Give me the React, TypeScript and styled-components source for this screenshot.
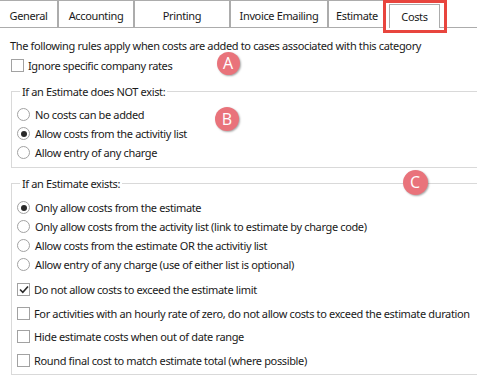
import React from 'react';
import styled, { createGlobalStyle } from 'styled-components';

const Global = createGlobalStyle`
  html, body { margin: 0; padding: 0; background: #fff; overflow: hidden; }
  body {
    font-family: "Noto Sans", "Open Sans", sans-serif;
    font-size: 11px;
    letter-spacing: -0.36px;
    color: #1a1a1a;
  }
  * { box-sizing: border-box; }
`;

const Page = styled.div`
  position: relative;
  width: 477px;
  height: 375px;
  overflow: hidden;
`;

const TabBar = styled.div`
  display: flex;
  align-items: flex-end;
  height: 28px;
  margin-left: -1px;
`;

const Tab = styled.div<{ $w: number; $active?: boolean; $gap?: number }>`
  position: relative;
  flex: 0 0 auto;
  width: ${p => p.$w}px;
  height: ${p => (p.$active ? 24 : 28)}px;
  margin-left: ${p => p.$gap ?? 0}px;
  border: 1px solid #acacac;
  border-bottom: ${p => (p.$active ? 'none' : '1px solid #acacac')};
  background: #fff;
  display: flex;
  align-items: center;
  justify-content: center;
  padding-top: ${p => (p.$active ? 0 : 4)}px;
  line-height: 16px;
  white-space: nowrap;
  ${p =>
    p.$active &&
    `
    &::after {
      content: '';
      position: absolute;
      left: -7px;
      right: -8px;
      top: -5px;
      bottom: -5px;
      border: 3px solid #e8453e;
    }
  `}
`;

const TabFiller = styled.div`
  flex: 1 1 auto;
  height: 28px;
  border-bottom: 1px solid #acacac;
`;

const Content = styled.div`
  padding: 0 0 0 10px;
`;

const Intro = styled.p`
  margin: 10px 0 0 0;
  line-height: 15px;
  white-space: nowrap;
`;

const CheckRow = styled.label<{ $h: number; $indent?: number }>`
  display: flex;
  align-items: center;
  height: ${p => p.$h}px;
  padding-left: ${p => p.$indent ?? 0}px;
  gap: 4px;
  white-space: nowrap;
`;

const Box = styled.span`
  flex: 0 0 auto;
  width: 13px;
  height: 13px;
  border: 1px solid #a2a2a2;
  background: #fff;
  display: flex;
  align-items: center;
  justify-content: center;
`;

const GroupBox = styled.fieldset<{ $mt: number; $pt: number; $pb: number }>`
  margin: ${p => p.$mt}px -40px 0 1px;
  padding: ${p => p.$pt}px 0 ${p => p.$pb}px 5px;
  border: 1px solid #d9d9d9;
  min-width: 0;
`;

const Legend = styled.legend`
  margin-left: 3px;
  padding: 0 2px;
  line-height: 15px;
`;

const RadioRow = styled.label`
  display: flex;
  align-items: center;
  height: 19px;
  gap: 5px;
  white-space: nowrap;
`;

const Radio = styled.span<{ $on?: boolean }>`
  flex: 0 0 auto;
  width: 13px;
  height: 13px;
  border-radius: 50%;
  border: 1px solid #a2a2a2;
  background: #fff;
  display: flex;
  align-items: center;
  justify-content: center;
  &::after {
    content: '';
    display: ${p => (p.$on ? 'block' : 'none')};
    width: 6px;
    height: 6px;
    border-radius: 50%;
    background: #2a2a2a;
  }
`;

const CheckList = styled.div`
  margin-top: 4px;
`;

const Badge = styled.div<{ $x: number; $y: number; $d: number }>`
  position: absolute;
  left: ${p => p.$x - p.$d / 2}px;
  top: ${p => p.$y - p.$d / 2}px;
  width: ${p => p.$d}px;
  height: ${p => p.$d}px;
  border-radius: 50%;
  background: #e9737b;
  box-shadow: 1px 1px 2px rgba(0, 0, 0, 0.35);
  color: #fff;
  font-family: "Open Sans", "Noto Sans", sans-serif;
  font-size: 16px;
  letter-spacing: 0;
  line-height: ${p => p.$d}px;
  text-align: center;
`;

const Tick = () => (
  <svg width="10" height="9" viewBox="0 0 10 9">
    <path d="M1 4.5 L3.8 7.3 L9 1.5" fill="none" stroke="#2a2a2a" strokeWidth="1.6" />
  </svg>
);

const tabs = [
  { t: 'General', w: 59 },
  { t: 'Accounting', w: 76 },
  { t: 'Printing', w: 96 },
  { t: 'Invoice Emailing', w: 98 },
  { t: 'Estimate', w: 58 },
];

const noEstimate = [
  { t: 'No costs can be added', on: false },
  { t: 'Allow costs from the activitiy list', on: true },
  { t: 'Allow entry of any charge', on: false },
];

const withEstimate = [
  { t: 'Only allow costs from the estimate', on: true },
  { t: 'Only allow costs from the activity list (link to estimate by charge code)', on: false },
  { t: 'Allow costs from the estimate OR the activitiy list', on: false },
  { t: 'Allow entry of any charge (use of either list is optional)', on: false },
];

const checks = [
  { t: 'Do not allow costs to exceed the estimate limit', on: true },
  { t: 'For activities with an hourly rate of zero, do not allow costs to exceed the estimate duration', on: false },
  { t: 'Hide estimate costs when out of date range', on: false },
  { t: 'Round final cost to match estimate total (where possible)', on: false },
];

export default function App() {
  return (
    <Page>
      <Global />
      <TabBar>
        {tabs.map(tb => (
          <Tab key={tb.t} $w={tb.w}>
            {tb.t}
          </Tab>
        ))}
        <Tab $w={51} $active $gap={3}>
          Costs
        </Tab>
        <TabFiller />
      </TabBar>
      <Content>
        <Intro>The following rules apply when costs are added to cases associated with this category</Intro>
        <CheckRow $h={15} $indent={1} style={{ marginTop: 5 }}>
          <Box />
          Ignore specific company rates
        </CheckRow>
        <GroupBox $mt={11} $pt={6} $pb={5}>
          <Legend>If an Estimate does NOT exist:</Legend>
          {noEstimate.map(r => (
            <RadioRow key={r.t}>
              <Radio $on={r.on} />
              {r.t}
            </RadioRow>
          ))}
        </GroupBox>
        <GroupBox $mt={8} $pt={7} $pb={2}>
          <Legend>If an Estimate exists:</Legend>
          {withEstimate.map(r => (
            <RadioRow key={r.t}>
              <Radio $on={r.on} />
              {r.t}
            </RadioRow>
          ))}
          <CheckList>
            {checks.map(c => (
              <CheckRow key={c.t} $h={23.5}>
                <Box>{c.on && <Tick />}</Box>
                {c.t}
              </CheckRow>
            ))}
          </CheckList>
        </GroupBox>
      </Content>
      <Badge $x={228} $y={63} $d={23}>A</Badge>
      <Badge $x={227} $y={119} $d={24}>B</Badge>
      <Badge $x={415} $y={182} $d={25}>C</Badge>
    </Page>
  );
}
